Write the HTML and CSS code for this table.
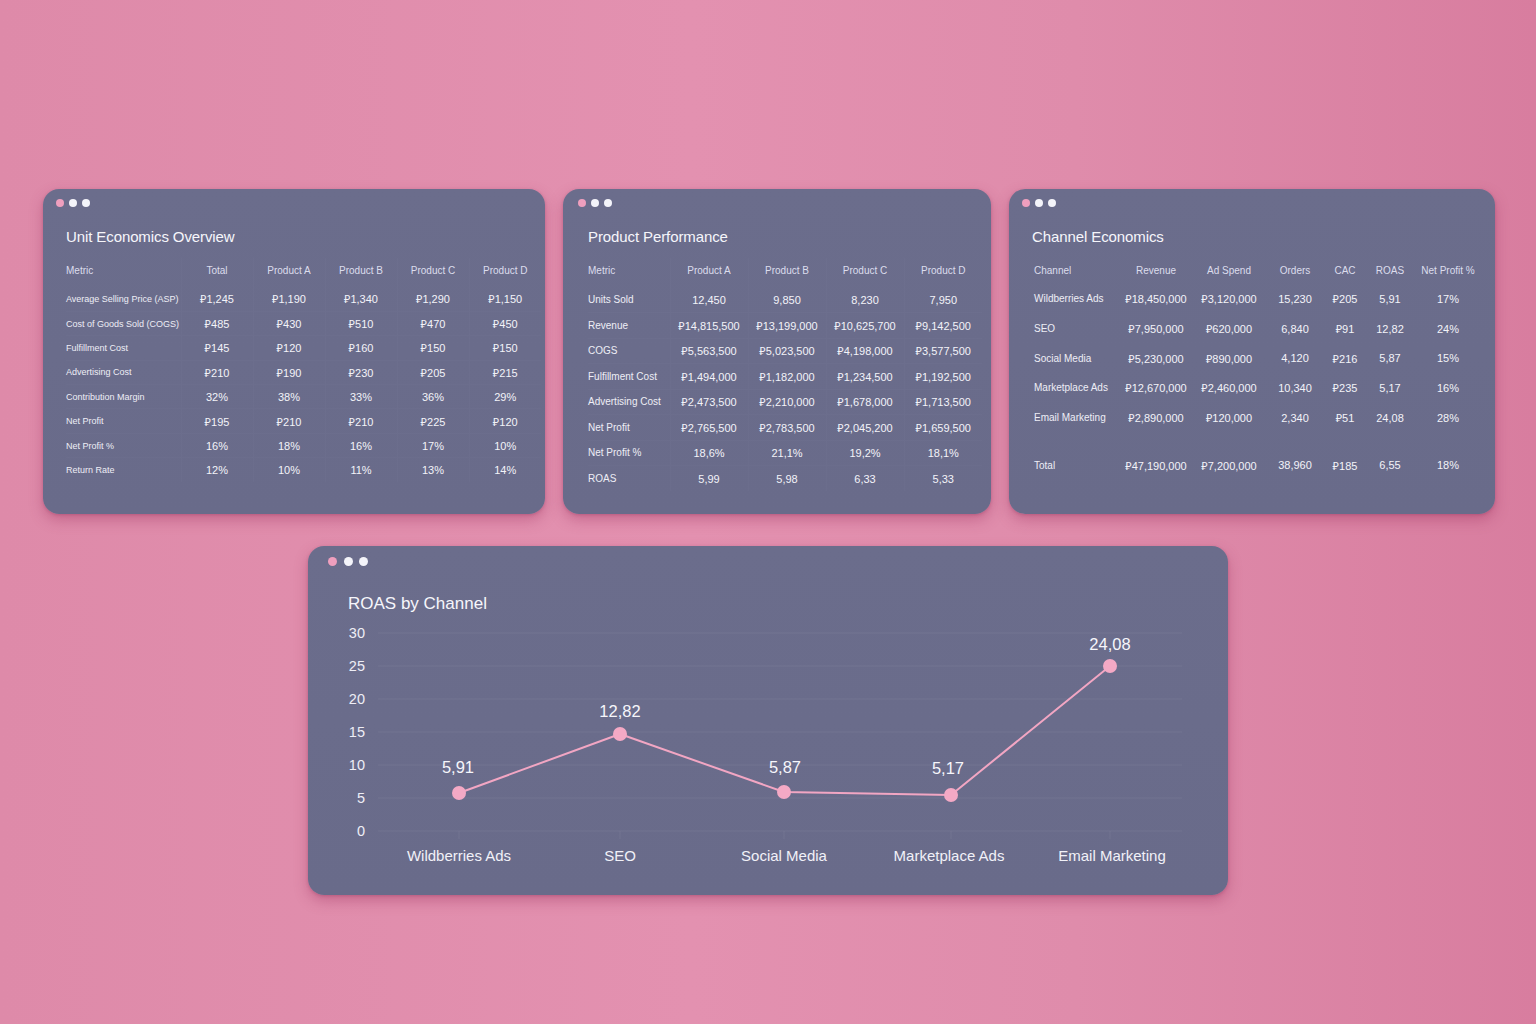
FILE: index.html
```html
<!DOCTYPE html>
<html lang="en">
<head>
<meta charset="utf-8">
<title>Unit Economics Dashboard</title>
<link rel="stylesheet" href="styles.css">
</head>
<body>
<main class="board">
  <div class="top-row">
    <section class="panel panel-unit">
      <div class="dots"><span class="dot pink"></span><span class="dot"></span><span class="dot"></span></div>
      <h2 class="title">Unit Economics Overview</h2>
      <table class="tbl tbl-unit lined">
        <colgroup><col class="c-label1"><col class="c72"><col class="c72"><col class="c72"><col class="c72"><col class="c72"></colgroup>
        <thead><tr><th class="lbl">Metric</th><th>Total</th><th>Product A</th><th>Product B</th><th>Product C</th><th>Product D</th></tr></thead>
        <tbody>
          <tr><td class="lbl">Average Selling Price (ASP)</td><td>₽1,245</td><td>₽1,190</td><td>₽1,340</td><td>₽1,290</td><td>₽1,150</td></tr>
          <tr><td class="lbl">Cost of Goods Sold (COGS)</td><td>₽485</td><td>₽430</td><td>₽510</td><td>₽470</td><td>₽450</td></tr>
          <tr><td class="lbl">Fulfillment Cost</td><td>₽145</td><td>₽120</td><td>₽160</td><td>₽150</td><td>₽150</td></tr>
          <tr><td class="lbl">Advertising Cost</td><td>₽210</td><td>₽190</td><td>₽230</td><td>₽205</td><td>₽215</td></tr>
          <tr><td class="lbl">Contribution Margin</td><td>32%</td><td>38%</td><td>33%</td><td>36%</td><td>29%</td></tr>
          <tr><td class="lbl">Net Profit</td><td>₽195</td><td>₽210</td><td>₽210</td><td>₽225</td><td>₽120</td></tr>
          <tr><td class="lbl">Net Profit %</td><td>16%</td><td>18%</td><td>16%</td><td>17%</td><td>10%</td></tr>
          <tr><td class="lbl">Return Rate</td><td>12%</td><td>10%</td><td>11%</td><td>13%</td><td>14%</td></tr>
        </tbody>
      </table>
    </section>

    <section class="panel panel-product">
      <div class="dots"><span class="dot pink"></span><span class="dot"></span><span class="dot"></span></div>
      <h2 class="title">Product Performance</h2>
      <table class="tbl tbl-product lined">
        <colgroup><col class="c-label2"><col class="c78"><col class="c78"><col class="c78"><col class="c78"></colgroup>
        <thead><tr><th class="lbl">Metric</th><th>Product A</th><th>Product B</th><th>Product C</th><th>Product D</th></tr></thead>
        <tbody>
          <tr><td class="lbl">Units Sold</td><td>12,450</td><td>9,850</td><td>8,230</td><td>7,950</td></tr>
          <tr><td class="lbl">Revenue</td><td>₽14,815,500</td><td>₽13,199,000</td><td>₽10,625,700</td><td>₽9,142,500</td></tr>
          <tr><td class="lbl">COGS</td><td>₽5,563,500</td><td>₽5,023,500</td><td>₽4,198,000</td><td>₽3,577,500</td></tr>
          <tr><td class="lbl">Fulfillment Cost</td><td>₽1,494,000</td><td>₽1,182,000</td><td>₽1,234,500</td><td>₽1,192,500</td></tr>
          <tr><td class="lbl">Advertising Cost</td><td>₽2,473,500</td><td>₽2,210,000</td><td>₽1,678,000</td><td>₽1,713,500</td></tr>
          <tr><td class="lbl">Net Profit</td><td>₽2,765,500</td><td>₽2,783,500</td><td>₽2,045,200</td><td>₽1,659,500</td></tr>
          <tr><td class="lbl">Net Profit %</td><td>18,6%</td><td>21,1%</td><td>19,2%</td><td>18,1%</td></tr>
          <tr><td class="lbl">ROAS</td><td>5,99</td><td>5,98</td><td>6,33</td><td>5,33</td></tr>
        </tbody>
      </table>
    </section>

    <section class="panel panel-channel">
      <div class="dots"><span class="dot pink"></span><span class="dot"></span><span class="dot"></span></div>
      <h2 class="title">Channel Economics</h2>
      <table class="tbl tbl-channel">
        <colgroup><col class="c-label3"><col class="c-rev"><col class="c-ad"><col class="c-ord"><col class="c-cac"><col class="c-roas"><col class="c-np"></colgroup>
        <thead><tr><th class="lbl">Channel</th><th>Revenue</th><th>Ad Spend</th><th>Orders</th><th>CAC</th><th>ROAS</th><th>Net Profit %</th></tr></thead>
        <tbody>
          <tr><td class="lbl">Wildberries Ads</td><td>₽18,450,000</td><td>₽3,120,000</td><td>15,230</td><td>₽205</td><td>5,91</td><td>17%</td></tr>
          <tr><td class="lbl">SEO</td><td>₽7,950,000</td><td>₽620,000</td><td>6,840</td><td>₽91</td><td>12,82</td><td>24%</td></tr>
          <tr><td class="lbl">Social Media</td><td>₽5,230,000</td><td>₽890,000</td><td>4,120</td><td>₽216</td><td>5,87</td><td>15%</td></tr>
          <tr><td class="lbl">Marketplace Ads</td><td>₽12,670,000</td><td>₽2,460,000</td><td>10,340</td><td>₽235</td><td>5,17</td><td>16%</td></tr>
          <tr><td class="lbl">Email Marketing</td><td>₽2,890,000</td><td>₽120,000</td><td>2,340</td><td>₽51</td><td>24,08</td><td>28%</td></tr>
          <tr class="spacer"><td colspan="7"></td></tr>
          <tr class="total"><td class="lbl">Total</td><td>₽47,190,000</td><td>₽7,200,000</td><td>38,960</td><td>₽185</td><td>6,55</td><td>18%</td></tr>
        </tbody>
      </table>
    </section>
  </div>

  <section class="panel panel-chart">
    <div class="dots dots-lg"><span class="dot pink"></span><span class="dot"></span><span class="dot"></span></div>
    <h2 class="chart-title">ROAS by Channel</h2>
    <svg class="chart" width="920" height="265" viewBox="0 0 920 265" aria-label="ROAS by Channel line chart">
      <g class="grid">
        <line x1="70" y1="18" x2="874" y2="18"/>
        <line x1="70" y1="51" x2="874" y2="51"/>
        <line x1="70" y1="84" x2="874" y2="84"/>
        <line x1="70" y1="117" x2="874" y2="117"/>
        <line x1="70" y1="150" x2="874" y2="150"/>
        <line x1="70" y1="183" x2="874" y2="183"/>
        <line x1="70" y1="216" x2="874" y2="216"/>
      </g>
      <g class="ticks">
        <line x1="151" y1="216" x2="151" y2="224"/>
        <line x1="312" y1="216" x2="312" y2="224"/>
        <line x1="476" y1="216" x2="476" y2="224"/>
        <line x1="643" y1="216" x2="643" y2="224"/>
        <line x1="802" y1="216" x2="802" y2="224"/>
      </g>
      <g class="ylab">
        <text x="57" y="18">30</text>
        <text x="57" y="51">25</text>
        <text x="57" y="84">20</text>
        <text x="57" y="117">15</text>
        <text x="57" y="150">10</text>
        <text x="57" y="183">5</text>
        <text x="57" y="216">0</text>
      </g>
      <polyline class="series" points="151,178 312,119 476,177 643,180 802,51"/>
      <g class="pts">
        <circle cx="151" cy="178" r="7"/>
        <circle cx="312" cy="119" r="7"/>
        <circle cx="476" cy="177" r="7"/>
        <circle cx="643" cy="180" r="7"/>
        <circle cx="802" cy="51" r="7"/>
      </g>
      <g class="vlab">
        <text x="150" y="158">5,91</text>
        <text x="312" y="102">12,82</text>
        <text x="477" y="158">5,87</text>
        <text x="640" y="159">5,17</text>
        <text x="802" y="35">24,08</text>
      </g>
      <g class="xlab">
        <text x="151" y="246">Wildberries Ads</text>
        <text x="312" y="246">SEO</text>
        <text x="476" y="246">Social Media</text>
        <text x="641" y="246">Marketplace Ads</text>
        <text x="804" y="246">Email Marketing</text>
      </g>
    </svg>
  </section>
</main>
</body>
</html>
```

FILE: styles.css
```css
* { box-sizing: border-box; }

html, body {
  margin: 0;
  padding: 0;
}

body {
  width: 1536px;
  height: 1024px;
  overflow: hidden;
  font-family: "Liberation Sans", "Noto Sans", "DejaVu Sans", Arial, sans-serif;
  color: #f2f2f8;
  background: linear-gradient(90deg, #de8aa9 0%, #e391b0 45%, #df8cab 70%, #d87d9f 100%);
}

.board {
  padding: 189px 0 0 0;
}

.top-row {
  display: flex;
  gap: 18px;
  padding-left: 43px;
}

.panel {
  background: linear-gradient(180deg, #6b6d8c 0%, #696b8a 100%);
  border-radius: 16px;
  box-shadow: 0 6px 14px rgba(150, 40, 85, 0.35), 0 1px 3px rgba(120, 30, 70, 0.25);
  padding-top: 10px;
}

.panel-unit { width: 502px; height: 325px; padding-left: 13px; }
.panel-product { width: 428px; height: 325px; padding-left: 15px; }
.panel-channel { width: 486px; height: 325px; padding-left: 13px; }

.dots {
  display: flex;
  gap: 5px;
  height: 8px;
}

.dot {
  width: 8px;
  height: 8px;
  border-radius: 50%;
  background: #f4f4fa;
}

.dot.pink { background: #ef9fbe; }

.title {
  margin: 21px 0 0 10px;
  font-size: 15px;
  line-height: 18px;
  font-weight: 400;
  color: #f6f6fb;
  letter-spacing: -0.1px;
}

.tbl {
  margin: 12px 0 0 10px;
  border-collapse: collapse;
  table-layout: fixed;
}

.tbl th, .tbl td {
  padding: 0;
  text-align: center;
  white-space: nowrap;
  vertical-align: middle;
}

.tbl th {
  font-size: 10px;
  font-weight: 400;
  color: #dcdded;
  padding-bottom: 5px;
}

.tbl td {
  font-size: 11px;
  color: #f3f3f9;
}

.tbl .lbl {
  text-align: left;
  font-size: 10px;
  color: #eeeef6;
}

.tbl th.lbl { color: #dcdded; }

.tbl thead tr { height: 29px; }

/* panel 1 */
.tbl-unit { width: 475px; margin-left: 10px; }
.c-label1 { width: 115px; }
.c72 { width: 72px; }
.tbl-unit tbody tr { height: 24.4px; }
.tbl-unit td.lbl { font-size: 9px; }

/* panel 2 */
.tbl-product { width: 394px; }
.c-label2 { width: 82px; }
.c78 { width: 78px; }
.tbl-product tbody tr { height: 25.5px; }

/* very subtle grid lines */
.lined tbody td {
  border-bottom: 1px solid rgba(255, 255, 255, 0.02);
}
.lined tbody td + td,
.lined thead th + th {
  border-left: 1px solid rgba(255, 255, 255, 0.02);
}
.lined tbody tr:last-child td { border-bottom: none; }

/* panel 3 */
.tbl-channel { width: 446px; margin-left: 12px; }
.tbl-channel thead tr { height: 26px; }
.tbl-channel th { padding-bottom: 2px; }
.c-label3 { width: 84px; }
.c-rev { width: 76px; }
.c-ad { width: 70px; }
.c-ord { width: 62px; }
.c-cac { width: 38px; }
.c-roas { width: 52px; }
.c-np { width: 64px; }
.tbl-channel tbody tr { height: 29.7px; }
.tbl-channel tbody tr.spacer { height: 18px; }

/* chart */
.panel-chart {
  width: 920px;
  height: 349px;
  margin: 32px 0 0 308px;
  padding-top: 11px;
}

.dots-lg {
  height: 9px;
  gap: 6.5px;
  padding-left: 20px;
}

.dots-lg .dot {
  width: 9px;
  height: 9px;
}

.chart-title {
  margin: 27px 0 0 40px;
  font-size: 17px;
  line-height: 22px;
  font-weight: 400;
  color: #f6f6fb;
}

.chart {
  display: block;
  font-family: "Liberation Sans", "Noto Sans", "DejaVu Sans", Arial, sans-serif;
}

.grid line {
  stroke: rgba(255, 255, 255, 0.06);
  stroke-width: 1;
}

.ticks line {
  stroke: rgba(255, 255, 255, 0.06);
  stroke-width: 1;
}

.ylab text {
  fill: #eeeef6;
  font-size: 14.5px;
  text-anchor: end;
  dominant-baseline: central;
}

.series {
  fill: none;
  stroke: #f2a6c3;
  stroke-width: 2;
  stroke-linejoin: round;
}

.pts circle {
  fill: #f4a9c5;
}

.vlab text {
  fill: #f6f6fb;
  font-size: 16.5px;
  text-anchor: middle;
}

.xlab text {
  fill: #f1f1f8;
  font-size: 15px;
  text-anchor: middle;
}
```
